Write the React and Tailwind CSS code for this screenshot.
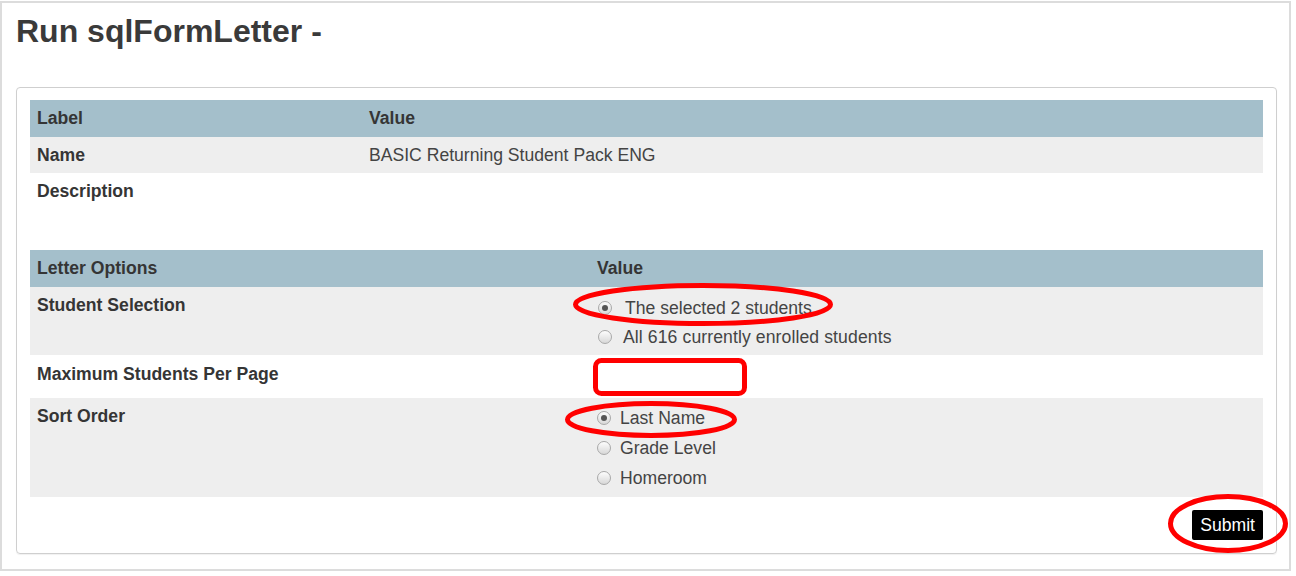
import React from 'react';

const font = { fontFamily: '"Liberation Sans", Arial, sans-serif' };

function Radio({ checked }) {
  return (
    <span className="inline-flex items-center justify-center w-[14px] h-[14px] rounded-full border border-[#a9a9a9] bg-gradient-to-b from-[#fdfdfd] to-[#d8d8d8] shrink-0">
      {checked && <span className="w-[6px] h-[6px] rounded-full bg-[#555]" />}
    </span>
  );
}

function RadioLine({ checked, label, gap, h }) {
  return (
    <div className={`flex items-center ${h}`}>
      <Radio checked={checked} />
      <span className={gap}>{label}</span>
    </div>
  );
}

export default function App() {
  return (
    <div className="relative w-[1296px] h-[576px] bg-white text-[17.6px] text-[#444]" style={font}>
      <div className="mt-[1px] w-[1291px] h-[570px] border-2 border-[#dcdcdc] pl-[14px] pt-[10px]">
        <h1 className="text-[32px] leading-[36px] font-bold text-[#3a3a3a]">Run sqlFormLetter -</h1>

        <div className="mt-[38px] w-[1261px] h-[467px] border border-[#cfcfcf] rounded-[4px] shadow-[0_1px_1px_rgba(0,0,0,0.06)] pl-[13px] pr-[12px] pt-[12px]">
          <table className="w-[1233px] table-fixed border-collapse leading-[20px]">
            <colgroup>
              <col className="w-[332px]" />
              <col />
            </colgroup>
            <thead>
              <tr className="bg-[#a4bfcb] h-[37px]">
                <th className="text-left align-top pt-[8px] px-[7px] font-bold text-[#353535]">Label</th>
                <th className="text-left align-top pt-[8px] px-[7px] font-bold text-[#353535]">Value</th>
              </tr>
            </thead>
            <tbody>
              <tr className="bg-[#eeeeee] h-[36px]">
                <td className="align-top pt-[8px] px-[7px] font-bold text-[#353535]">Name</td>
                <td className="align-top pt-[8px] px-[7px]">BASIC Returning Student Pack ENG</td>
              </tr>
              <tr className="h-[42px]">
                <td className="align-top pt-[8px] px-[7px] font-bold text-[#353535]">Description</td>
                <td className="align-top pt-[8px] px-[7px]"></td>
              </tr>
            </tbody>
          </table>

          <table className="mt-[35px] w-[1233px] table-fixed border-collapse leading-[20px]">
            <colgroup>
              <col className="w-[560px]" />
              <col />
            </colgroup>
            <thead>
              <tr className="bg-[#a4bfcb] h-[37px]">
                <th className="text-left align-top pt-[8px] px-[7px] font-bold text-[#353535]">Letter Options</th>
                <th className="text-left align-top pt-[8px] px-[7px] font-bold text-[#353535]">Value</th>
              </tr>
            </thead>
            <tbody>
              <tr className="bg-[#eeeeee] h-[68px]">
                <td className="align-top pt-[8px] px-[7px] font-bold text-[#353535]">Student Selection</td>
                <td className="align-top pt-[6px] pl-[8px]">
                  <RadioLine checked label="The selected 2 students" gap="ml-[13px]" h="h-[29px]" />
                  <RadioLine label="All 616 currently enrolled students" gap="ml-[11px] tracking-[0.1px]" h="h-[29px]" />
                </td>
              </tr>
              <tr className="h-[43px]">
                <td className="align-top pt-[9px] px-[7px] font-bold text-[#353535]">Maximum Students Per Page</td>
                <td className="align-top pt-[4px] pl-[5px]">
                  <div className="w-[150px] h-[32px] bg-white" />
                </td>
              </tr>
              <tr className="bg-[#eeeeee] h-[99px]">
                <td className="align-top pt-[8px] px-[7px] font-bold text-[#353535]">Sort Order</td>
                <td className="align-top pt-[5px] pl-[7px]">
                  <RadioLine checked label="Last Name" gap="ml-[9px]" h="h-[30px]" />
                  <RadioLine label="Grade Level" gap="ml-[9px]" h="h-[30px]" />
                  <RadioLine label="Homeroom" gap="ml-[9px]" h="h-[30px]" />
                </td>
              </tr>
            </tbody>
          </table>

          <div className="w-[1233px] flex justify-end mt-[13px]">
            <button className="h-[30px] px-[8px] bg-black text-white rounded-[2px] text-[17.6px] leading-[20px]">Submit</button>
          </div>
        </div>
      </div>

      {/* red annotation marks */}
      <svg className="absolute left-0 top-0 pointer-events-none" width="1296" height="576" viewBox="0 0 1296 576" fill="none">
        <ellipse cx="703" cy="303.5" rx="127.5" ry="19" stroke="#ff0000" strokeWidth="5" />
        <rect x="595.5" y="359.5" width="149" height="33" rx="6" stroke="#ff0000" strokeWidth="5" />
        <ellipse cx="651" cy="418.5" rx="83.5" ry="16" stroke="#ff0000" strokeWidth="5" />
        <ellipse cx="1228" cy="522.5" rx="57.5" ry="27" stroke="#ff0000" strokeWidth="5" />
      </svg>
    </div>
  );
}
